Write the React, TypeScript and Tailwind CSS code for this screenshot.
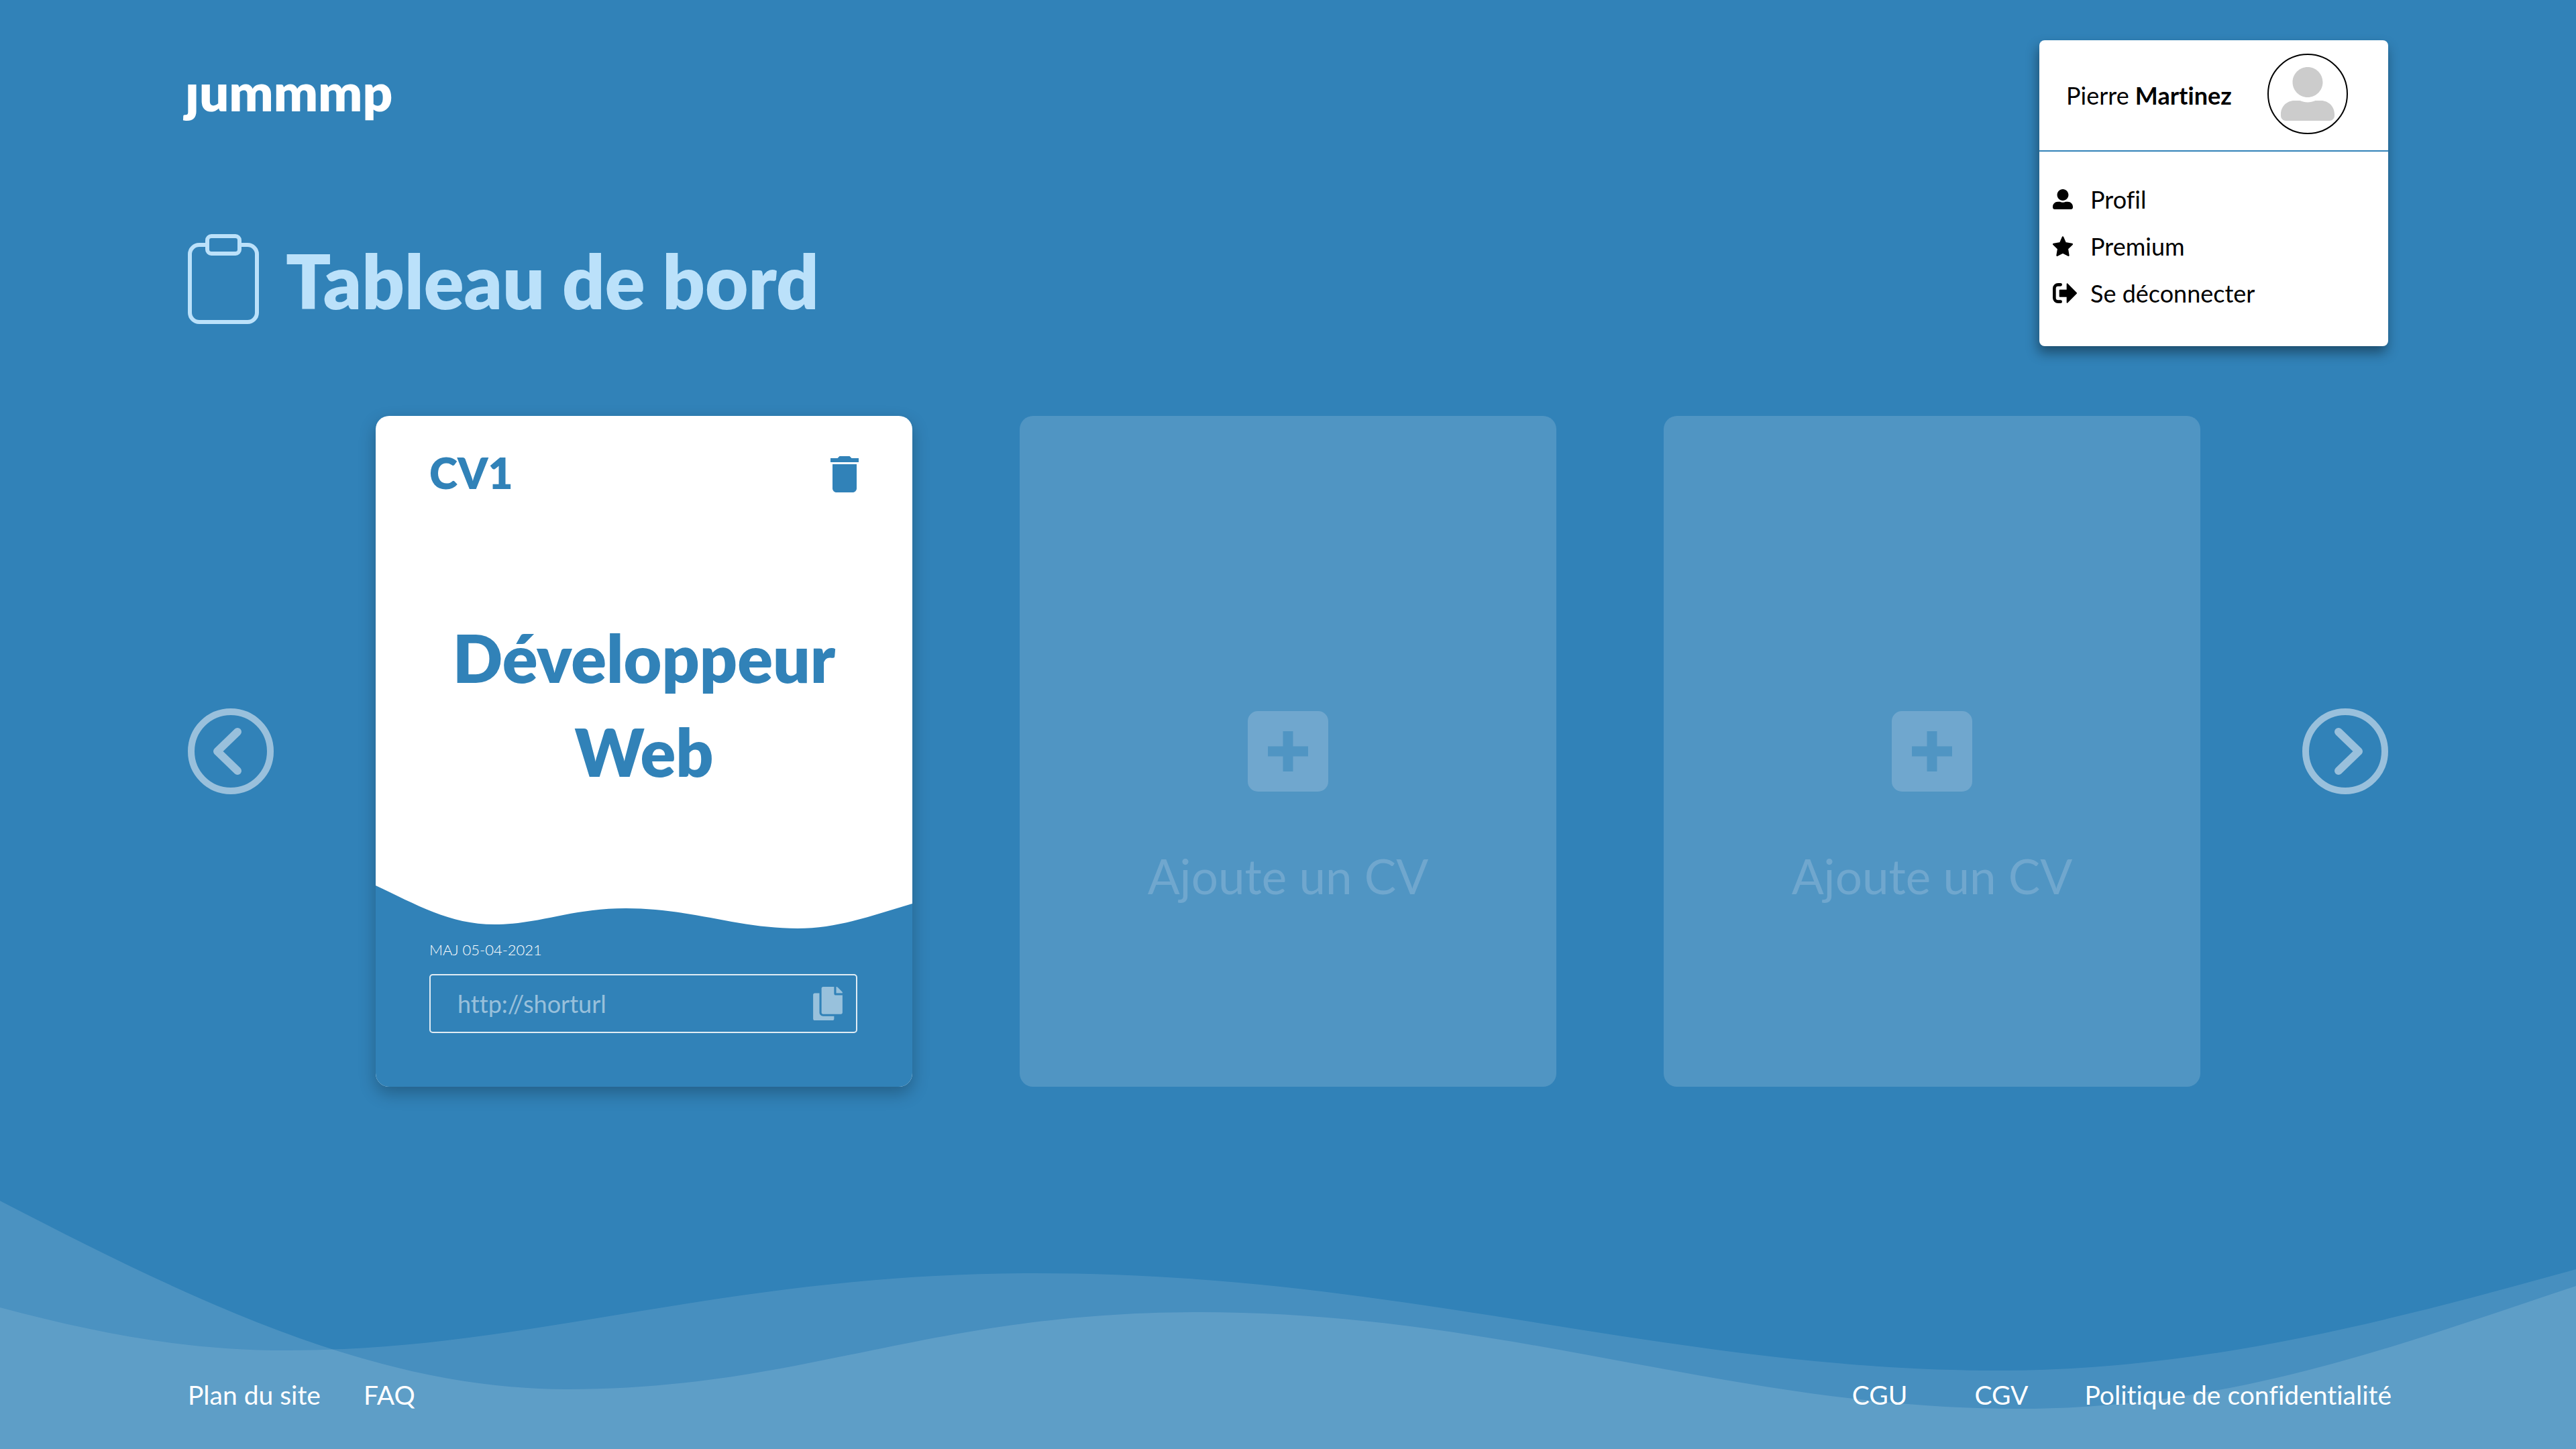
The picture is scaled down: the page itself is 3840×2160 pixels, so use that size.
import React from "react";
import { FaCopy, FaUserAlt } from "react-icons/fa";
import { MdDelete } from "react-icons/md";

function ClipboardIcon() {
  return (
    <svg aria-hidden="true" viewBox="0 0 106 134" className="h-[134px] w-[106px] shrink-0" fill="none" stroke="currentColor" strokeWidth="6">
      <path d="M27 16H17A14 14 0 0 0 3 30V117A14 14 0 0 0 17 131H89A14 14 0 0 0 103 117V30A14 14 0 0 0 89 16H79" />
      <rect x="29" y="3" width="48" height="26" rx="6" />
    </svg>
  );
}

function StarIcon() {
  return (
    <svg aria-hidden="true" viewBox="0 0 90 90" className="size-[30px]" fill="currentColor" stroke="currentColor" strokeWidth="8" strokeLinejoin="round">
      <path d="M45 5L56 31L86 36L65 56L70 86L45 73L20 86L25 56L4 36L34 31Z" />
    </svg>
  );
}

function SignOutIcon() {
  return (
    <svg aria-hidden="true" viewBox="0 0 108 90" className="h-[30px] w-9">
      <path
        d="M35 7H24A17 17 0 0 0 7 24V66A17 17 0 0 0 24 83H35"
        fill="none"
        stroke="currentColor"
        strokeWidth="14"
        strokeLinecap="round"
        strokeLinejoin="round"
      />
      <path
        d="M65 4L105 45L65 86V59H32V32H65Z"
        fill="currentColor"
        stroke="currentColor"
        strokeWidth="6"
        strokeLinejoin="round"
      />
    </svg>
  );
}

function PlusIcon() {
  return (
    <svg aria-hidden="true" viewBox="0 0 240 240" className="size-[120px]" fill="currentColor">
      <path
        fillRule="evenodd"
        d="M30 0H210A30 30 0 0 1 240 30V210A30 30 0 0 1 210 240H30A30 30 0 0 1 0 210V30A30 30 0 0 1 30 0ZM105 60V105H60V135H105V180H135V135H180V105H135V60Z"
      />
    </svg>
  );
}

function ArrowButton({ label, path }: { label: string; path: string }) {
  return (
    <button type="button" aria-label={label} className="shrink-0 text-[#99c0dc]">
      <svg aria-hidden="true" viewBox="0 0 128 128" className="size-32" fill="none" stroke="currentColor">
        <circle cx="64" cy="64" r="59" strokeWidth="10" />
        <path d={path} strokeWidth="12" strokeLinecap="round" strokeLinejoin="round" />
      </svg>
    </button>
  );
}

const menuItems = [
  { label: "Profil", icon: <FaUserAlt aria-hidden="true" className="size-[30px]" /> },
  { label: "Premium", icon: <StarIcon /> },
  { label: "Se déconnecter", icon: <SignOutIcon /> },
];

function UserMenu() {
  return (
    <nav aria-label="Compte" className="w-[520px] shrink-0 rounded-lg bg-white text-4xl text-black shadow-[-2px_10px_18px_rgba(0,0,0,0.4)]">
      <div className="flex items-center justify-between border-b-2 border-[#3182b8] py-5 pr-15 pl-10">
        <p className="leading-[44px]">
          Pierre <b>Martinez</b>
        </p>
        <div className="mb-1 flex size-[120px] items-center justify-center rounded-full border-2 border-black">
          <FaUserAlt aria-hidden="true" className="size-20 text-[#cccccc]" />
        </div>
      </div>
      <ul className="pt-9 pb-11">
        {menuItems.map((item) => (
          <li key={item.label}>
            <a href="#" className="flex h-[70px] items-center gap-5 pl-5">
              <span className="w-9">{item.icon}</span>
              {item.label}
            </a>
          </li>
        ))}
      </ul>
    </nav>
  );
}

function CvCard() {
  return (
    <article className="flex h-[1000px] flex-col overflow-hidden rounded-[20px] bg-white text-[#3182b8] shadow-[0_10px_24px_rgba(0,0,0,0.26)]">
      <header className="flex items-start justify-between pt-[43px] pr-[65px] pl-20">
        <h2 className="text-[64px] leading-[84px] font-extrabold">CV1</h2>
        <button type="button" aria-label="Supprimer CV1" className="mt-2">
          <MdDelete aria-hidden="true" className="size-[72px]" />
        </button>
      </header>
      <div className="flex flex-1 items-center justify-center px-20 pt-8">
        <p className="text-center text-[98px] leading-[140px] font-extrabold">Développeur Web</p>
      </div>
      <svg aria-hidden="true" viewBox="0 0 800 65" preserveAspectRatio="none" className="-mb-px h-[65px] w-full shrink-0" fill="currentColor">
        <path d="M0 0C60 28 110 58 177 58C245 58 290 34 373 34C470 34 540 64 629 64C690 64 745 43 800 27V65H0Z" />
      </svg>
      <div className="bg-[#3182b8] pt-4 pr-[82px] pb-20 pl-20 text-white">
        <label htmlFor="short-url" className="block text-[22px] leading-8 font-light">
          MAJ 05-04-2021
        </label>
        <div className="mt-5 flex h-[88px] items-center rounded-[5px] border-2 border-white/85 pr-5 pl-10 text-white/50">
          <input id="short-url" type="text" readOnly value="http://shorturl" className="min-w-0 flex-1 bg-transparent text-4xl outline-none" />
          <button type="button" aria-label="Copier le lien">
            <FaCopy aria-hidden="true" className="h-[50px] w-11" />
          </button>
        </div>
      </div>
    </article>
  );
}

function AddCard() {
  return (
    <button
      type="button"
      className="flex h-[1000px] flex-col items-center gap-21 rounded-[20px] bg-[#5095c3] pt-[440px] text-[71px] leading-[84px] text-[#70a7ce]"
    >
      <PlusIcon />
      Ajoute un CV
    </button>
  );
}

function FooterWaves() {
  return (
    <svg aria-hidden="true" viewBox="0 0 3840 370" preserveAspectRatio="none" className="absolute bottom-0 left-0 h-[370px] w-full" fill="#ffffff">
      <path
        opacity="0.13"
        d="M0 0C290 150 560 281 845 281C1200 281 1380 166 1788 166C2250 166 2580 310 3010 310C3330 310 3580 213 3840 127V370H0Z"
      />
      <path
        opacity="0.11"
        d="M0 159C150 199 280 223 429 223C790 223 1080 108 1543 108C2100 108 2480 253 2983 253C3280 253 3560 180 3840 102V370H0Z"
      />
    </svg>
  );
}

export default function App() {
  return (
    <div className="relative flex min-h-screen flex-col bg-[#3182b8] font-['Lato',sans-serif] [font-variant-ligatures:none]">
      <FooterWaves />
      <header className="relative flex items-start justify-between px-[280px] pt-15">
        <div className="pt-7">
          <a href="#" aria-label="jummmp" className="-ml-1 block w-fit text-[78px] leading-[96px] font-extrabold text-white">
            ȷummmp
          </a>
          <div className="mt-[165px] flex items-center gap-10 text-[#bbe1fa]">
            <ClipboardIcon />
            <h1 className="pt-1 text-[111px] leading-[128px] font-extrabold">Tableau de bord</h1>
          </div>
        </div>
        <UserMenu />
      </header>

      <main className="relative mt-[104px] flex items-center gap-[152px] px-[280px]">
        <ArrowButton label="Précédent" path="M74 35L44 64L74 93" />
        <div className="grid flex-1 grid-cols-3 gap-40">
          <CvCard />
          <AddCard />
          <AddCard />
        </div>
        <ArrowButton label="Suivant" path="M54 35L84 64L54 93" />
      </main>

      <footer className="relative mt-auto flex justify-between pr-[275px] pb-[57px] pl-[280px] text-[39px] leading-[48px] text-white">
        <nav aria-label="Site" className="flex gap-16">
          <a href="#">Plan du site</a>
          <a href="#">FAQ</a>
        </nav>
        <nav aria-label="Informations légales" className="flex gap-[84px]">
          <a href="#" className="pr-4">CGU</a>
          <a href="#">CGV</a>
          <a href="#">Politique de confidentialité</a>
        </nav>
      </footer>
    </div>
  );
}
